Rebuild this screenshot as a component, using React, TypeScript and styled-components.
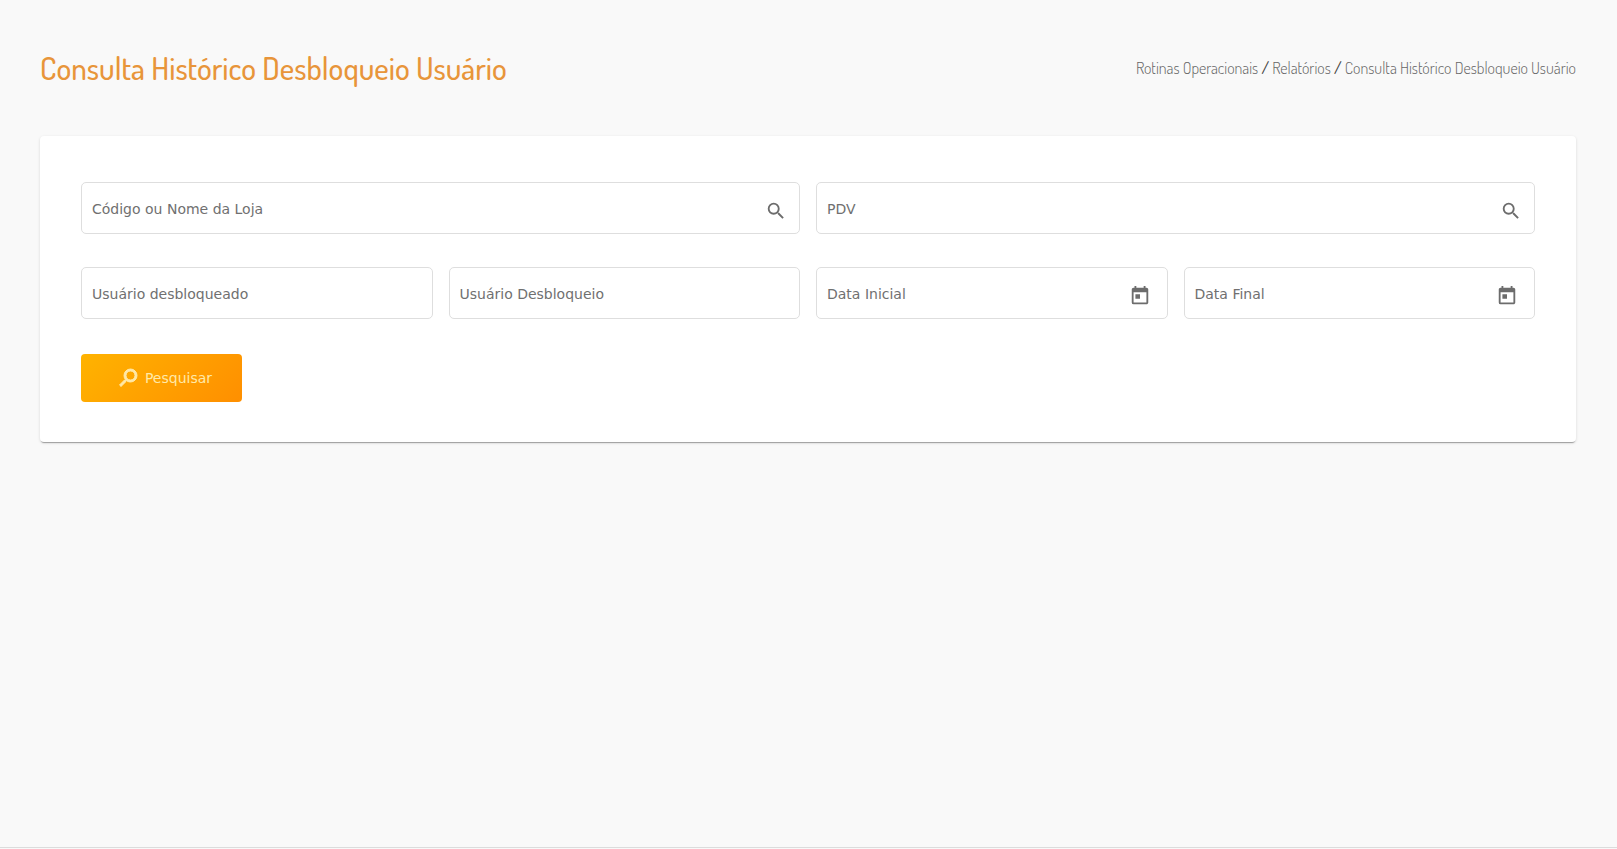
import React from "react";
import styled, { createGlobalStyle } from "styled-components";
import { MdSearch, MdToday } from "react-icons/md";

const GlobalStyle = createGlobalStyle`
  * { box-sizing: border-box; }
  body {
    margin: 0;
    background: #f9f9f9;
    color: #666;
    font-family: Verdana, "DejaVu Sans", sans-serif;
    font-size: 14px;
  }
`;

const Page = styled.div`
  min-height: 100vh;
  display: flex;
  flex-direction: column;
`;

const Main = styled.main`
  flex: 1;
  padding: 40px 41px 40px 40px;
`;

const Header = styled.header`
  display: flex;
  justify-content: space-between;
  align-items: center;
  height: 56px;
  margin-bottom: 40px;
  font-family: Dosis, "Roboto Condensed", Lato, sans-serif;
`;

const Title = styled.h1`
  margin: 0;
  color: #e8953a;
  font-size: 31px;
  font-weight: 500;
  line-height: 40px;
`;

const Crumbs = styled.nav`
  font-size: 16px;
  font-weight: 500;
  line-height: 24px;
  color: #444;
`;

const Crumb = styled.a`
  color: #666;
  font-weight: 300;
  text-decoration: none;
`;

const Card = styled.form`
  padding: 46px 41px 40px;
  background: #fff;
  border-radius: 4px;
  box-shadow: 0 2px 1px -1px rgba(0, 0, 0, 0.3), 0 1px 3px rgba(0, 0, 0, 0.14);
`;

const Grid = styled.div`
  display: grid;
  grid-template-columns: repeat(4, 1fr);
  gap: 33px 16px;
  margin-bottom: 35px;
`;

const FieldBox = styled.div<{ $span: number }>`
  position: relative;
  grid-column: span ${(p) => p.$span};
  display: flex;
  height: 52px;
  border: 1px solid #dedede;
  border-radius: 5px;
  &:focus-within { border-color: #ff9800; }
`;

const Input = styled.input`
  flex: 1;
  min-width: 0;
  padding: 0 10px;
  border: 0;
  outline: 0;
  background: transparent;
  font: inherit;
  color: #444;
`;

const Label = styled.label`
  position: absolute;
  left: 10px;
  top: 16px;
  line-height: 20px;
  color: #707070;
  pointer-events: none;

  ${Input}:not(:placeholder-shown) + & { visibility: hidden; }
`;

const IconButton = styled.button<{ $edge: number }>`
  display: flex;
  align-items: center;
  padding: 5px ${(p) => p.$edge}px 0 0;
  border: 0;
  background: none;
  color: #6c6c6c;
  font-size: 22px;
  cursor: pointer;
`;

const Submit = styled.button`
  display: flex;
  align-items: center;
  justify-content: center;
  gap: 5px;
  width: 161px;
  height: 48px;
  padding: 0 0 0 5px;
  border: 0;
  border-radius: 4px;
  background: linear-gradient(135deg, #ffb300, #ff8f00);
  color: #ffe9a8;
  font: inherit;
  cursor: pointer;

  svg {
    font-size: 24px;
    transform: scaleX(-1);
  }

  svg path:last-child {
    stroke: currentColor;
    stroke-width: 1px;
  }
`;

const Footer = styled.footer`
  height: 2px;
  border-top: 1px solid #dcdcdc;
`;

type FieldProps = {
  id: string;
  label: string;
  span?: number;
  icon?: "search" | "date";
};

function Field({ id, label, span = 1, icon }: FieldProps) {
  return (
    <FieldBox $span={span}>
      <Input id={id} placeholder=" " autoComplete="off" />
      <Label htmlFor={id}>{label}</Label>
      {icon === "search" && (
        <IconButton type="button" $edge={12} aria-label={`Buscar ${label}`}>
          <MdSearch />
        </IconButton>
      )}
      {icon === "date" && (
        <IconButton type="button" $edge={16} aria-label={`Abrir ${label}`}>
          <MdToday />
        </IconButton>
      )}
    </FieldBox>
  );
}

export default function App() {
  return (
    <Page>
      <GlobalStyle />
      <Main>
        <Header>
          <Title>Consulta Histórico Desbloqueio Usuário</Title>
          <Crumbs aria-label="Navegação">
            <Crumb href="#rotinas">Rotinas Operacionais</Crumb>
            {" / "}
            <Crumb href="#relatorios">Relatórios</Crumb>
            {" / "}
            <Crumb href="#consulta">Consulta Histórico Desbloqueio Usuário</Crumb>
          </Crumbs>
        </Header>
        <Card onSubmit={(e) => e.preventDefault()}>
          <Grid>
            <Field id="loja" label="Código ou Nome da Loja" span={2} icon="search" />
            <Field id="pdv" label="PDV" span={2} icon="search" />
            <Field id="desbloqueado" label="Usuário desbloqueado" />
            <Field id="desbloqueio" label="Usuário Desbloqueio" />
            <Field id="inicial" label="Data Inicial" icon="date" />
            <Field id="final" label="Data Final" icon="date" />
          </Grid>
          <Submit type="submit">
            <MdSearch />
            Pesquisar
          </Submit>
        </Card>
      </Main>
      <Footer />
    </Page>
  );
}
